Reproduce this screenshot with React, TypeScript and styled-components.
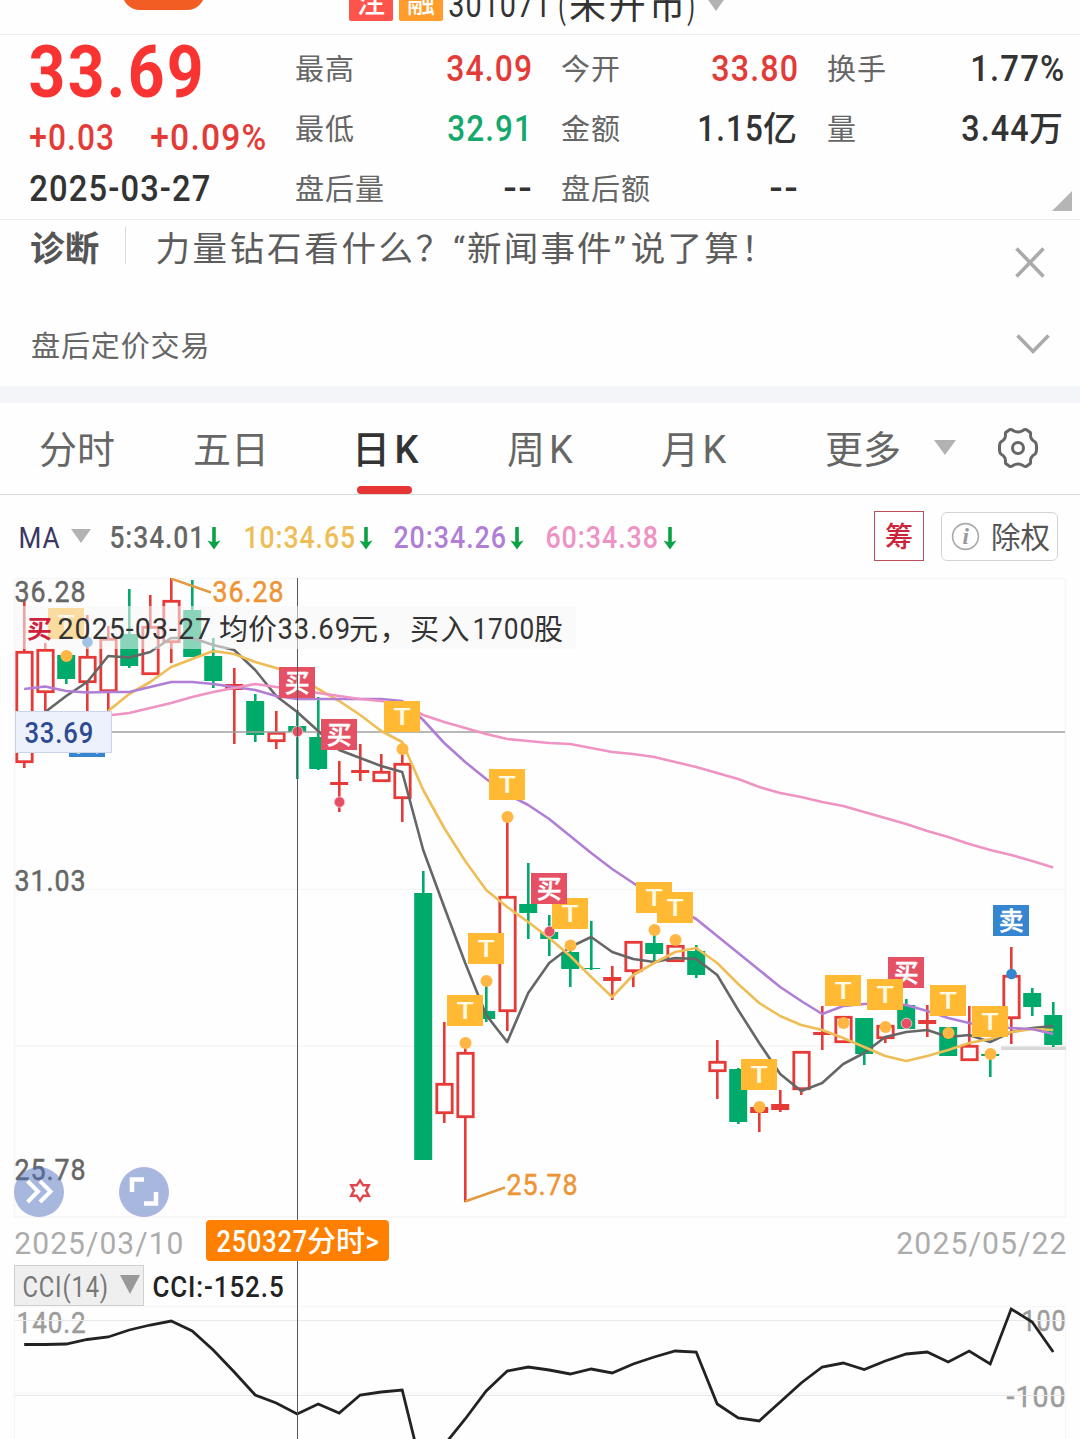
import React, { useLayoutEffect, useRef, useState } from "react";
import styled, { createGlobalStyle } from "styled-components";

const FONT = `Roboto, "Noto Sans CJK SC", "Liberation Sans", sans-serif`;

const C = {
  red: "#e33b38",
  brightRed: "#f93232",
  green: "#14a86c",
  candleGreen: "#00aa6b",
  candleRed: "#e53a38",
  ink: "#333333",
  grey: "#666666",
  light: "#acacac",
  ma10: "#efbd55",
  ma20: "#b07ed4",
  ma60: "#ee93c3",
  orange: "#ee9434",
  buy: "#e55064",
  sell: "#3585d0",
  trade: "#ffb933",
};

const Global = createGlobalStyle`
  * { box-sizing: border-box; }
  body { margin: 0; background: #fefefe; font-family: ${FONT}; }
`;

/* ---------- text ---------- */

const TRACK = 0.035;

const NumBox = styled.span<{ $w: number; $size: number; $color: string; $weight: number }>`
  display: inline-block;
  flex: none;
  width: ${(p) => p.$w}px;
  font-size: ${(p) => p.$size}px;
  font-weight: ${(p) => p.$weight};
  color: ${(p) => p.$color};
  line-height: 1.2;
  letter-spacing: ${TRACK}em;
  white-space: nowrap;
`;
const NumInner = styled.span`
  display: inline-block;
  transform-origin: 0 50%;
`;

type NumProps = { w: number; size: number; color?: string; weight?: number; children: string };

/* Condensed figures: the string is squeezed to the width of its column. */
function Num({ w, size, color = C.ink, weight = 400, children }: NumProps) {
  const ref = useRef<HTMLSpanElement>(null);
  const [scale, setScale] = useState(1);
  useLayoutEffect(() => {
    if (ref.current) setScale((w + size * 0.05) / (ref.current.offsetWidth - size * TRACK));
  }, [w, size, children]);
  return (
    <NumBox $w={w} $size={size} $color={color} $weight={weight}>
      <NumInner ref={ref} style={{ transform: `translateX(${-size * 0.02}px) scaleX(${scale})` }}>
        {children}
      </NumInner>
    </NumBox>
  );
}

const Han = styled.span<{ $size: number; $gap?: number; $drop?: number; $color?: string; $weight?: number }>`
  display: block;
  flex: none;
  padding-top: ${(p) => p.$drop ?? 0}px;
  font-size: ${(p) => p.$size}px;
  letter-spacing: ${(p) => p.$gap ?? 0}px;
  color: ${(p) => p.$color ?? C.grey};
  font-weight: ${(p) => p.$weight ?? 400};
  line-height: 1.2;
  white-space: nowrap;
`;

/* ---------- page parts ---------- */

const Screen = styled.main`
  width: 1080px;
  height: 1439px;
  overflow: hidden;
  display: flex;
  flex-direction: column;
  background: #fefefe;
`;

const TitleBar = styled.header`
  flex: none;
  height: 35px;
  border-bottom: 1px solid #ededed;
  display: flex;
  align-items: flex-end;
  overflow: hidden;
`;
const Pill = styled.div`
  flex: none;
  width: 83px;
  height: 44px;
  margin: 0 144px 24px 122px;
  border-radius: 18px;
  background: #f25d24;
`;
const Tag = styled.div<{ $bg: string }>`
  flex: none;
  width: 44px;
  height: 40px;
  margin: 0 6px 13px 0;
  border-radius: 2px;
  background: ${(p) => p.$bg};
  display: flex;
  align-items: flex-end;
  justify-content: center;
`;
const Code = styled.div`
  display: flex;
  align-items: flex-start;
  height: 46px;
  margin-bottom: 3px;
`;
const Caret = styled.i<{ $w: number; $h: number; $color?: string }>`
  display: block;
  flex: none;
  width: 0;
  height: 0;
  border-left: ${(p) => p.$w / 2}px solid transparent;
  border-right: ${(p) => p.$w / 2}px solid transparent;
  border-top: ${(p) => p.$h}px solid ${(p) => p.$color ?? "#b2b2b2"};
`;
const TitleCaret = styled.div`
  margin: 0 0 23px 12px;
`;

const Quote = styled.section`
  flex: none;
  height: 185px;
  border-bottom: 1px solid #ededed;
  display: grid;
  grid-template-columns: 265px 768px;
  padding-left: 30px;
  position: relative;
`;
const PriceBlock = styled.div`
  display: flex;
  flex-direction: column;
`;
const Line = styled.div<{ $h: number; $gap?: number }>`
  height: ${(p) => p.$h}px;
  display: flex;
  align-items: center;
  gap: ${(p) => p.$gap ?? 0}px;
`;
const Stats = styled.div`
  padding-top: 4.5px;
  display: grid;
  grid-template-columns: repeat(3, 236px);
  grid-auto-rows: 60px;
  column-gap: 30px;
`;
const Stat = styled.div`
  display: flex;
  align-items: center;
  justify-content: space-between;
`;
const StatValue = styled.div`
  display: flex;
  align-items: center;
  gap: 1px;
`;
const Corner = styled.i`
  position: absolute;
  right: 8px;
  bottom: 8px;
  border-left: 20px solid transparent;
  border-bottom: 20px solid #b5b5b5;
`;

const Diagnose = styled.section`
  flex: none;
  height: 84px;
  display: flex;
  align-items: flex-start;
  padding: 7px 34px 0 30px;
`;
const Divider = styled.i`
  width: 1px;
  height: 37px;
  margin: 0 29px 0 26px;
  background: #dcdcdc;
`;
const Headline = styled.div`
  flex: 1;
  display: flex;
  align-items: center;
  height: 45px;
`;
const Quot = styled.span<{ $w: number }>`
  width: ${(p) => p.$w}px;
  font-size: 34px;
  line-height: 1.2;
  color: #5c5c5c;
  white-space: nowrap;
`;
const IconSlot = styled.div`
  padding-top: 20px;
  height: 50px;
`;
const AfterHours = styled.section`
  flex: none;
  height: 82px;
  padding: 0 30px 2px 31px;
  display: flex;
  align-items: center;
  justify-content: space-between;
`;
const Band = styled.div`
  flex: none;
  height: 17px;
  background: #f3f5f9;
`;

const Tabs = styled.nav`
  flex: none;
  height: 92px;
  border-bottom: 1px solid #dadada;
  display: grid;
  grid-template-columns: 154px 159px 155px 154px 164px 109px 63px 1fr;
  padding-left: 39px;
`;
const Tab = styled.div<{ $active?: boolean }>`
  display: flex;
  flex-direction: column;
  justify-content: space-between;
  align-items: flex-start;
  height: 91px;
  padding-top: 25px;
  &::after {
    content: "";
    width: 55px;
    height: 8px;
    margin-left: 5px;
    border-radius: 4px;
    background: ${(p) => (p.$active ? "#e63535" : "transparent")};
  }
`;
const TabCaret = styled.div`
  padding-top: 37px;
`;
const TabIcon = styled.div`
  padding-top: 24px;
`;

const MaBar = styled.div`
  flex: none;
  height: 83px;
  display: flex;
  align-items: center;
  padding: 0 22px 0 19px;
`;
const MaName = styled.div`
  display: flex;
  align-items: center;
  gap: 12px;
  padding-top: 4px;
`;
const MaCaret = styled.div`
  padding-bottom: 5px;
`;
const MaItem = styled.div<{ $ml: number; $gap: number }>`
  display: flex;
  align-items: center;
  gap: ${(p) => p.$gap}px;
  margin-left: ${(p) => p.$ml}px;
  padding-top: 2px;
`;
const ChipBtn = styled.button`
  margin: 0 17px 1px auto;
  padding: 0;
  width: 50px;
  height: 50px;
  border: 1.5px solid #b8505e;
  background: #fff;
  font-family: inherit;
`;
const AdjustBtn = styled.button`
  width: 117px;
  height: 49px;
  padding: 0 0 0 9px;
  border: 1.5px solid #d3d3d3;
  border-radius: 6px;
  background: #fff;
  display: flex;
  align-items: center;
  gap: 11px;
  font-family: inherit;
`;

const ChartArea = styled.section`
  flex: none;
  position: relative;
  height: 861px;
  display: flex;
  flex-direction: column;
`;
const KChart = styled.svg`
  display: block;
  flex: none;
  width: 1080px;
  height: 640px;
`;
const DateRow = styled.div`
  flex: none;
  height: 46px;
  padding: 5px 15px 0 15px;
  display: flex;
  align-items: center;
  justify-content: space-between;
`;
const CciRow = styled.div`
  flex: none;
  height: 42px;
  padding-left: 14px;
  display: flex;
  align-items: flex-end;
  gap: 9px;
`;
const CciSelect = styled.div`
  width: 130px;
  height: 41px;
  padding: 4px 3px 0 8px;
  display: flex;
  align-items: center;
  justify-content: space-between;
  border: 1.5px solid #d0d0d0;
  background: #efefef;
`;
const CciCaret = styled.div`
  padding-bottom: 6px;
`;
const CciValue = styled.div`
  height: 36px;
`;
const CciChart = styled.svg`
  display: block;
  flex: none;
  width: 1080px;
  height: 133px;
`;
const Crosshair = styled.i`
  position: absolute;
  left: 297px;
  top: 0;
  width: 1px;
  height: 861px;
  background: #585858;
`;
const DayBtn = styled.button`
  position: absolute;
  left: 206px;
  top: 642px;
  width: 183px;
  height: 41px;
  padding: 3px 0 0 11px;
  border: 0;
  border-radius: 4px;
  background: #ff8000;
  display: flex;
  align-items: center;
  font-family: inherit;
`;
const Tip = styled.div`
  position: absolute;
  left: 15px;
  top: 28px;
  width: 561px;
  height: 43px;
  padding: 5px 0 0 12px;
  display: flex;
  align-items: center;
  border-radius: 2px;
  background: rgba(246, 246, 246, 0.56);
`;
const Gap = styled.i<{ $w: number }>`
  width: ${(p) => p.$w}px;
  flex: none;
`;
const PriceTag = styled.div`
  position: absolute;
  left: 15px;
  top: 133px;
  width: 97px;
  height: 42px;
  padding: 4px 0 0 9px;
  display: flex;
  align-items: center;
  border: 1px solid #c9d5ea;
  background: #edf1fb;
`;
const RoundBtn = styled.button<{ $x: number }>`
  position: absolute;
  left: ${(p) => p.$x}px;
  top: 589px;
  width: 50px;
  height: 50px;
  padding: 0;
  border: 0;
  border-radius: 50%;
  background: rgba(80, 111, 190, 0.5);
`;

/* ---------- data ---------- */

const STEP = 21;
const xAt = (i: number) => 24.2 + STEP * i;

/* [rising, wick top, body top, body bottom, wick bottom] */
type Candle = [0 | 1, number, number, number, number];
const candles: Candle[] = [
  [1, 601, 651, 763, 768], [1, 643, 649, 693, 722], [0, 655, 655, 679, 684], [1, 615, 656, 683, 722],
  [1, 626, 638, 692, 722], [0, 589, 634, 666, 668], [1, 595, 626, 675, 675], [1, 578, 600, 643, 663],
  [0, 580, 610, 657, 657], [0, 638, 656, 681, 688], [1, 668, 684, 690, 744], [0, 694, 701, 735, 742],
  [1, 711, 732, 742, 749], [0, 710, 726, 732, 779], [0, 697, 737, 769, 770], [1, 761, 782, 785, 812],
  [1, 744, 770, 773, 781], [1, 754, 771, 782, 782], [1, 750, 763, 799, 822], [0, 871, 893, 1160, 1160],
  [1, 1022, 1083, 1114, 1123], [1, 1043, 1052, 1118, 1202], [0, 981, 1011, 1019, 1022], [1, 817, 896, 1012, 1031],
  [0, 863, 904, 913, 939], [0, 915, 932, 939, 956], [0, 945, 952, 969, 987], [0, 921, 968, 969, 970],
  [1, 966, 977, 981, 1000], [1, 941, 941, 972, 987], [0, 930, 943, 954, 962], [1, 940, 945, 962, 962],
  [0, 945, 951, 975, 978], [1, 1040, 1061, 1072, 1099], [0, 1068, 1069, 1122, 1124], [1, 1105, 1107, 1113, 1132],
  [1, 1090, 1104, 1110, 1112], [1, 1051, 1051, 1090, 1095], [1, 1006, 1032, 1035, 1050], [1, 1016, 1016, 1043, 1043],
  [0, 1018, 1018, 1054, 1065], [1, 1025, 1025, 1039, 1043], [0, 999, 1005, 1029, 1029], [1, 1005, 1020, 1024, 1037],
  [0, 1027, 1027, 1056, 1056], [1, 1006, 1045, 1061, 1061], [0, 1050, 1054, 1056, 1077], [1, 947, 975, 1019, 1044],
  [0, 988, 993, 1007, 1016], [0, 1002, 1015, 1045, 1047],
];

const ma5 = [712, 696, 682, 656, 657.5, 652, 638, 638, 645, 650, 670, 696, 712, 731, 750, 758, 766, 772, 850, 907, 963, 1015,
  1042, 993, 963, 947, 937, 952, 959, 962, 958, 959, 975, 1010, 1043, 1074, 1091, 1083, 1064, 1053, 1037, 1032, 1030, 1037,
  1035, 1042, 1032, 1028, 1026];
const ma10 = [711, 694, 682, 667, 659, 651, 654, 662, 668, 675, 689, 701, 715, 731, 742, 790, 828, 861, 890, 907, 922, 938,
  956, 977, 997, 975, 963, 952, 948, 963, 984, 1003, 1016, 1025, 1030, 1038, 1047, 1056, 1061, 1056, 1050, 1043, 1039, 1032,
  1029, 1030];
const ma20 = [689, 686.5, 691, 692.5, 692, 692, 687, 682, 682, 684, 687, 690, 696, 699, 699, 699, 699, 699, 701, 720, 743,
  762, 779, 794, 805, 819, 836, 853, 869, 883, 897, 908, 919, 936, 953, 970, 987, 1001, 1014, 1006, 1004, 1003, 1005, 1011,
  1018, 1023, 1027, 1028, 1029, 1034];
const ma60 = [715.5, 713, 708, 703, 697, 692, 688, 684, 687, 689, 693, 696, 699, 701, 704, 715, 722, 728, 734, 739, 741, 743,
  744, 748, 752, 754, 757, 762, 767, 773, 779, 787, 793, 797, 802, 806, 812, 818, 824, 831, 837, 844, 850, 855, 861, 867.5];
const cci = [1344.5, 1344.5, 1344, 1339.5, 1337, 1330, 1325, 1321, 1331, 1350, 1372, 1395, 1403, 1414, 1404, 1413, 1395, 1392,
  1390, 1475, 1445, 1419, 1391, 1371, 1367, 1370, 1374, 1369, 1373, 1364, 1357, 1351, 1352, 1404, 1418, 1421, 1402, 1383,
  1367, 1363, 1369.5, 1361, 1354, 1352, 1362, 1351, 1364, 1309, 1322, 1352];

const points = (values: number[]) => {
  const first = candles.length - values.length;
  return values.map((v, i) => `${xAt(first + i)},${v}`).join(" ");
};

type Kind = "T" | "买" | "卖";
const badgeFill: Record<Kind, string> = { T: C.trade, 买: C.buy, 卖: C.sell };
/* [kind, candle index, badge top, dot y] in paint order */
const marks: [Kind, number, number, number][] = [
  ["T", 2, 608, 656], ["卖", 3, 726, 642], ["买", 13, 667, 731.5], ["买", 15, 719, 802], ["T", 18, 701, 749],
  ["T", 21, 995, 1043], ["T", 22, 933, 981], ["T", 23, 769, 817], ["T", 26, 898, 945.5], ["买", 25, 873, 931.5],
  ["T", 30, 882, 930], ["T", 31, 892, 940], ["T", 35, 1059, 1107], ["T", 39, 975, 1023], ["买", 42, 957, 1023.5],
  ["T", 41, 979, 1027], ["T", 44, 985, 1033], ["T", 46, 1006, 1054], ["卖", 47, 905, 974],
];

function Candles() {
  return (
    <g>
      {candles.map(([up, wt, bt, bb, wb], i) => {
        const x = xAt(i);
        const color = up ? C.candleRed : C.candleGreen;
        const h = bb - bt;
        return (
          <g key={i}>
            {wt < bt && <rect x={x - 1.2} y={wt} width={2.6} height={bt - wt} fill={color} />}
            {wb > bb && <rect x={x - 1.2} y={bb} width={2.6} height={wb - bb} fill={color} />}
            {up && h > 6 ? (
              <rect x={x - 7.4} y={bt + 1.3} width={15.4} height={h - 2.6} fill="#fff" stroke={color} strokeWidth={2.8} />
            ) : (
              <rect x={x - 9} y={bt} width={18} height={h} fill={color} />
            )}
          </g>
        );
      })}
    </g>
  );
}

function Badge({ kind, index, top }: { kind: Kind; index: number; top: number }) {
  const x = xAt(index);
  return (
    <g>
      <rect x={x - 18.2} y={top} width={36} height={31} fill={badgeFill[kind]} />
      {kind === "T" ? (
        <text x={x - 8.8} y={top + 23.8} fontSize={24.5} fontWeight={500} fill="#fffbe6" textLength={17.4} lengthAdjust="spacingAndGlyphs">
          T
        </text>
      ) : (
        <text x={x} y={top + 24.5} textAnchor="middle" fontSize={25} fontWeight={500} fill="#fff" stroke="#fff" strokeWidth={0.4}>
          {kind}
        </text>
      )}
    </g>
  );
}

function Label({ x, y, w, size = 30, color = C.grey, weight = 400, children }: Omit<NumProps, "size"> & { size?: number; x: number; y: number }) {
  return (
    <text
      x={x - 0.4}
      y={y}
      textLength={w + 2}
      lengthAdjust="spacingAndGlyphs"
      letterSpacing={size * TRACK}
      fontSize={size}
      fontWeight={weight}
      fill={color}
      stroke={color}
      strokeWidth={0.5}
    >
      {children}
    </text>
  );
}

const DownArrow = () => (
  <svg width="14" height="24" viewBox="0 0 14 24">
    <path d="M7 1v18" stroke="#0aa244" strokeWidth="3.6" fill="none" />
    <path d="M0.5 14.500L7 16.500l6.500-2L7 23.500z" fill="#0aa244" />
  </svg>
);

const stats: { label: string; value: string; w: number; unit?: string; color?: string }[] = [
  { label: "最高", value: "34.09", w: 84, color: C.red },
  { label: "今开", value: "33.80", w: 85, color: C.red },
  { label: "换手", value: "1.77%", w: 92 },
  { label: "最低", value: "32.91", w: 83, color: C.green },
  { label: "金额", value: "1.15", w: 64, unit: "亿" },
  { label: "量", value: "3.44", w: 66, unit: "万" },
  { label: "盘后量", value: "--", w: 27 },
  { label: "盘后额", value: "--", w: 27 },
];

const averages = [
  { text: "5:34.01", w: 93, ml: 19, gap: 4, color: C.grey },
  { text: "10:34.65", w: 110, ml: 23, gap: 5, color: C.ma10 },
  { text: "20:34.26", w: 111, ml: 21, gap: 5, color: C.ma20 },
  { text: "60:34.38", w: 111, ml: 22, gap: 6, color: C.ma60 },
];

export default function App() {
  return (
    <>
      <Global />
      <Screen>
        <TitleBar>
          <Pill />
          <Tag $bg="#ff544b">
            <Han $size={28} $color="#fff" $weight={500}>注</Han>
          </Tag>
          <Tag $bg="#ff9c2c">
            <Han $size={28} $color="#fff" $weight={500}>融</Han>
          </Tag>
          <Code>
            <Num w={100} size={35}>301071</Num>
            <Gap $w={10} />
            <Num w={6} size={36}>(</Num>
            <Gap $w={4} />
            <Han $size={37} $gap={2.7} $color={C.ink}>未开市</Han>
            <Num w={6} size={36}>)</Num>
          </Code>
          <TitleCaret>
            <Caret $w={20} $h={14} />
          </TitleCaret>
        </TitleBar>

        <Quote>
          <PriceBlock>
            <Line $h={76}>
              <Num w={171} size={73} weight={700} color={C.brightRed}>33.69</Num>
            </Line>
            <Line $h={54} $gap={38}>
              <Num w={83} size={36.5} weight={500} color={C.red}>+0.03</Num>
              <Num w={114} size={36.5} weight={500} color={C.red}>+0.09%</Num>
            </Line>
            <Line $h={49}>
              <Num w={179} size={37} weight={500}>2025-03-27</Num>
            </Line>
          </PriceBlock>
          <Stats>
            {stats.map((s) => (
              <Stat key={s.label}>
                <Han $size={29} $gap={1} $drop={2.5}>{s.label}</Han>
                <StatValue>
                  <Num w={s.w} size={37} weight={500} color={s.color}>{s.value}</Num>
                  {s.unit && <Han $size={34} $color={C.ink} $weight={500}>{s.unit}</Han>}
                </StatValue>
              </Stat>
            ))}
          </Stats>
          <Corner />
        </Quote>

        <Diagnose>
          <Han $size={34.5} $gap={0.2} $drop={2} $color="#555" $weight={700}>诊断</Han>
          <Divider />
          <Headline>
            <Han $size={34.5} $gap={2.7} $color="#5c5c5c">力量钻石看什么？</Han>
            <Quot $w={14}>“</Quot>
            <Han $size={34.5} $gap={2.2} $color="#5c5c5c">新闻事件</Han>
            <Quot $w={17}>”</Quot>
            <Han $size={34.5} $gap={2.2} $color="#5c5c5c">说了算！</Han>
          </Headline>
          <IconSlot>
            <svg width="32" height="32" viewBox="0 0 32 32" fill="none" stroke="#aaa" strokeWidth="3.6">
              <path d="M2.500 1.500l27 28M29.500 1.500l-27 28" />
            </svg>
          </IconSlot>
        </Diagnose>
        <AfterHours>
          <Han $size={29} $gap={0.9} $drop={6}>盘后定价交易</Han>
          <svg width="34" height="22" viewBox="0 0 34 22" fill="none" stroke="#aaa" strokeWidth="3.6">
            <path d="M1.500 2.500L17 18.500L32.500 2.500" />
          </svg>
        </AfterHours>
        <Band />

        <Tabs>
          <Tab><Han $size={38}>分时</Han></Tab>
          <Tab><Han $size={38}>五日</Han></Tab>
          <Tab $active><Han $size={38} $gap={4.5} $color={C.ink} $weight={500}>日K</Han></Tab>
          <Tab><Han $size={38} $gap={4}>周K</Han></Tab>
          <Tab><Han $size={38} $gap={3.5}>月K</Han></Tab>
          <Tab><Han $size={38}>更多</Han></Tab>
          <TabCaret><Caret $w={22} $h={15} /></TabCaret>
          <TabIcon>
            <svg width="42" height="42" viewBox="-21 -21 42 42" fill="none" stroke="#666" strokeWidth="3">
              <path
                strokeLinejoin="round"
                d="M-8.500 -18.300Q-6.500 -19 -5 -17.500Q0 -14.500 5 -17.500Q6.500 -19 8.500 -18.300L12.300 -15.500Q12.800 -14.500 12.500 -12.500Q12.700 -8.500 16.800 -6.300Q18 -5.500 18.300 -3.500Q18.800 0 18.300 3.500Q18 5.500 16.800 6.300Q12.700 8.500 12.500 12.500Q12.800 14.500 12.300 15.500L8.500 18.300Q6.500 19 5 17.500Q0 14.500 -5 17.500Q-6.500 19 -8.500 18.300L-12.300 15.500Q-12.800 14.500 -12.500 12.500Q-12.700 8.500 -16.800 6.300Q-18 5.500 -18.300 3.500Q-18.800 0 -18.300 -3.500Q-18 -5.500 -16.800 -6.300Q-12.700 -8.500 -12.500 -12.500Q-12.800 -14.500 -12.300 -15.500Z"
              />
              <circle r="5.500" />
            </svg>
          </TabIcon>
        </Tabs>

        <MaBar>
          <MaName>
            <Num w={40} size={29} color="#3b3763">MA</Num>
            <MaCaret><Caret $w={21} $h={14} /></MaCaret>
          </MaName>
          {averages.map((a) => (
            <MaItem key={a.text} $ml={a.ml} $gap={a.gap}>
              <Num w={a.w} size={31} weight={500} color={a.color}>{a.text}</Num>
              <DownArrow />
            </MaItem>
          ))}
          <ChipBtn>
            <Han $size={28} $color="#cc2438" $weight={500} $drop={3}>筹</Han>
          </ChipBtn>
          <AdjustBtn>
            <svg width="29" height="29" viewBox="0 0 29 29">
              <circle cx="14.500" cy="14.500" r="12.900" fill="none" stroke="#aaa" strokeWidth="1.600" />
              <text x="14.800" y="22" textAnchor="middle" fontFamily="Liberation Serif, serif" fontStyle="italic" fontWeight="700" fontSize="23" fill="#999">i</text>
            </svg>
            <Han $size={29.5} $color="#555" $drop={4}>除权</Han>
          </AdjustBtn>
        </MaBar>

        <ChartArea>
          <KChart viewBox="0 578 1080 640">
            <path d="M14.500 578.500H1065.500V1217H14.500ZM14.500 889.500H1065.500M14.500 1046H1065.500" fill="none" stroke="#f5f5f5" strokeWidth="1.500" />
            <rect x="1001" y="1046.500" width="65" height="3.500" fill="#d9d9d9" />
            <Candles />
            <path d="M112 732H1065" stroke="#a0a0a0" strokeWidth="1.600" />
            <g fill="none" strokeWidth="2.600" strokeLinejoin="round">
              <polyline points={points(ma5)} stroke={C.grey} />
              <polyline points={points(ma10)} stroke={C.ma10} />
              <polyline points={points(ma20)} stroke={C.ma20} />
              <polyline points={points(ma60)} stroke={C.ma60} />
            </g>
            {marks.map(([kind, i, , dot]) => (
              <circle key={i} cx={xAt(i) + 0.3} cy={dot} r={kind === "T" ? 6 : 5.3} fill={kind === "T" ? "#ffb642" : badgeFill[kind]} stroke={kind === "买" ? "#f7d9dd" : "none"} strokeWidth="0.800" />
            ))}
            {marks.map(([kind, i, top]) => (
              <Badge key={i} kind={kind} index={i} top={top} />
            ))}
            <path d="M171 578.500L211 592.500M465 1201.500L505 1187.500" stroke="#e39a40" strokeWidth="2.400" fill="none" />
            <Label x={15} y={601.5} w={70}>36.28</Label>
            <Label x={15} y={891} w={70}>31.03</Label>
            <Label x={15} y={1179.5} w={70}>25.78</Label>
            <Label x={213} y={601.5} w={70} color={C.orange}>36.28</Label>
            <Label x={507} y={1195} w={70} color={C.orange}>25.78</Label>
            <path
              d="M360 1180.500L363.200 1185.300H368.800L366 1190.500L368.800 1195.700H363.200L360 1200.500L356.800 1195.700H351.200L354 1190.500L351.200 1185.300H356.800Z"
              fill="none"
              stroke="#e0474c"
              strokeWidth="2.400"
            />
          </KChart>
          <DateRow>
            <Num w={167} size={32} color={C.light}>2025/03/10</Num>
            <Num w={168} size={32} color={C.light}>2025/05/22</Num>
          </DateRow>
          <CciRow>
            <CciSelect>
              <Num w={84} size={29} color="#777">CCI(14)</Num>
              <CciCaret><Caret $w={20} $h={19} $color="#999" /></CciCaret>
            </CciSelect>
            <CciValue>
              <Num w={130} size={29} weight={500} color="#222">CCI:-152.5</Num>
            </CciValue>
          </CciRow>
          <CciChart viewBox="0 1306 1080 133">
            <path d="M14.500 1439V1306.500H1065.500V1439M14.500 1393H1065.500" fill="none" stroke="#f6f6f6" strokeWidth="1" />
            <Label x={17} y={1333} w={68} color="#9c9c9c">140.2</Label>
            <Label x={1022} y={1331} w={43} color="#9c9c9c">100</Label>
            <Label x={1007} y={1407} w={58} color="#9c9c9c">-100</Label>
            <path d="M14.500 1320.500H1065.500M14.500 1395.500H1065.500" fill="none" stroke="#e9e9e9" strokeWidth="1" />
            <polyline points={points(cci)} fill="none" stroke="#222" strokeWidth="2.800" />
          </CciChart>

          <Crosshair />
          <Tip>
            <Han $size={25} $color="#d0203c" $weight={700}>买</Han>
            <Gap $w={6} />
            <Num w={152} size={29.5}>2025-03-27</Num>
            <Gap $w={9} />
            <Han $size={29} $color={C.ink}>均价</Han>
            <Gap $w={1} />
            <Num w={71} size={29.5}>33.69</Num>
            <Han $size={29} $gap={1.5} $color={C.ink}>元，买入</Han>
            <Gap $w={2} />
            <Num w={60} size={29.5}>1700</Num>
            <Gap $w={1} />
            <Han $size={29} $color={C.ink}>股</Han>
          </Tip>
          <PriceTag>
            <Num w={67} size={29.5} weight={500} color="#2d4b92">33.69</Num>
          </PriceTag>
          <RoundBtn $x={14}>
            <svg width="50" height="50" viewBox="0 0 50 50" fill="none" stroke="#fff" strokeWidth="4">
              <path d="M13.500 14L24 24.500L13.500 35M26 14L36.500 24.500L26 35" />
            </svg>
          </RoundBtn>
          <RoundBtn $x={119}>
            <svg width="50" height="50" viewBox="0 0 50 50" fill="none" stroke="#fff" strokeWidth="4.500">
              <path d="M13 25V12.500H25M37 25V36.500H25" />
            </svg>
          </RoundBtn>
          <DayBtn>
            <Num w={89} size={31} weight={500} color="#fff">250327</Num>
            <Gap $w={1} />
            <Han $size={29} $color="#fff" $weight={500}>分时</Han>
            <Gap $w={1} />
            <Num w={12} size={27} weight={500} color="#fff">{">"}</Num>
          </DayBtn>
        </ChartArea>
      </Screen>
    </>
  );
}
